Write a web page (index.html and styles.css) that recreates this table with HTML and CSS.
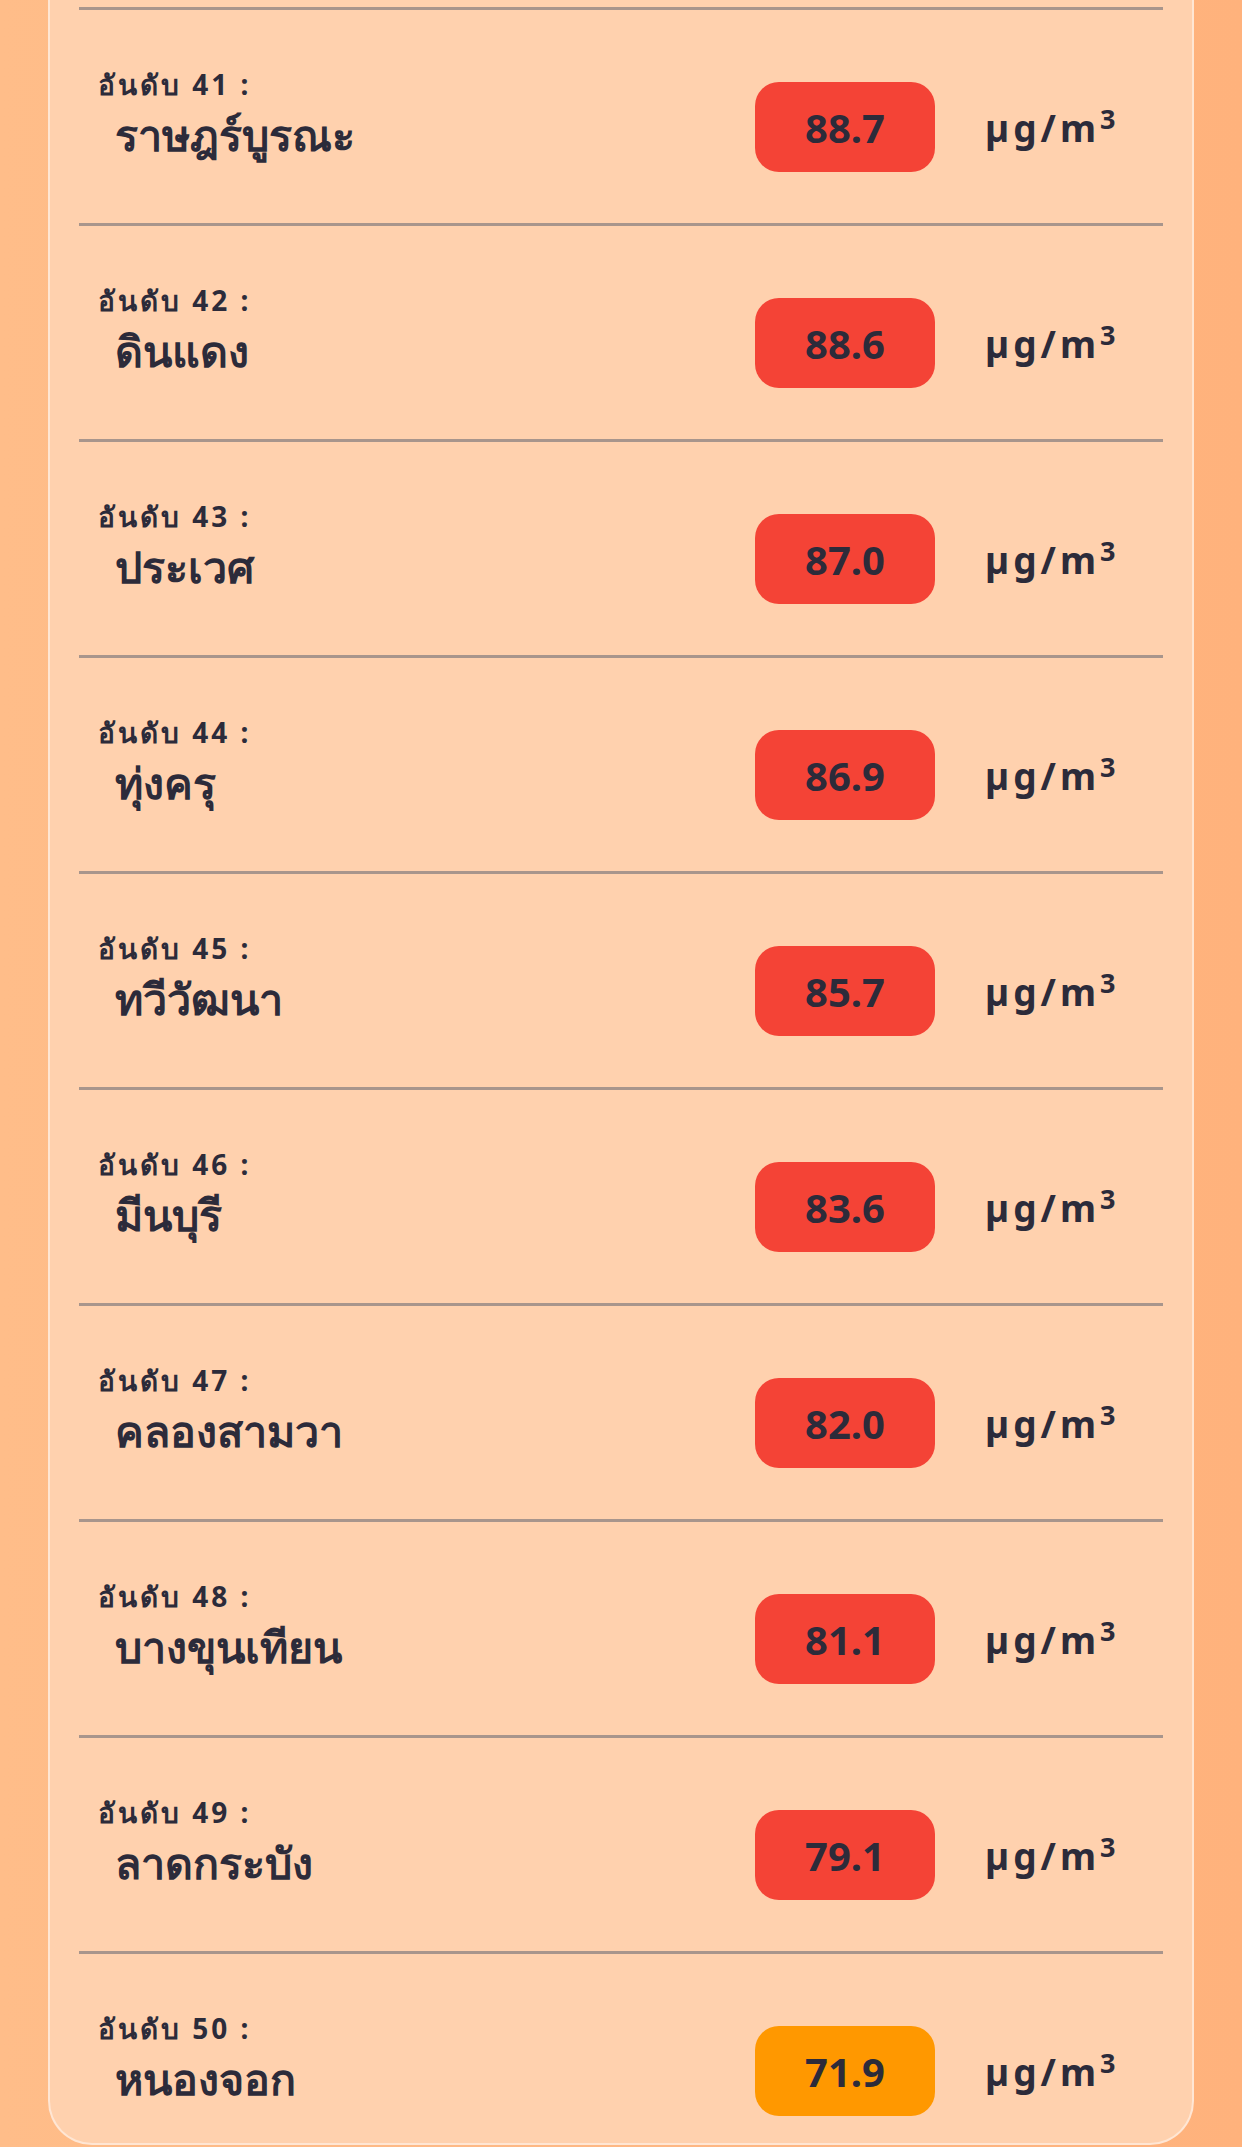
FILE: index.html
```html
<!DOCTYPE html>
<html lang="th">
<head>
    <meta charset="UTF-8">
    <meta name="viewport" content="width=device-width, initial-scale=1.0">
    <title>อันดับฝุ่น PM2.5</title>
    <link rel="stylesheet" href="styles.css">
</head>
<body>
    <div class="card">
        <div class="row">
            <div class="info"><div class="rank">อันดับ 41 :</div><div class="name">ราษฎร์บูรณะ</div></div>
            <div class="value"><span class="badge red">88.7</span><span class="unit">µg/m<sup>3</sup></span></div>
        </div>
        <div class="row">
            <div class="info"><div class="rank">อันดับ 42 :</div><div class="name">ดินแดง</div></div>
            <div class="value"><span class="badge red">88.6</span><span class="unit">µg/m<sup>3</sup></span></div>
        </div>
        <div class="row">
            <div class="info"><div class="rank">อันดับ 43 :</div><div class="name">ประเวศ</div></div>
            <div class="value"><span class="badge red">87.0</span><span class="unit">µg/m<sup>3</sup></span></div>
        </div>
        <div class="row">
            <div class="info"><div class="rank">อันดับ 44 :</div><div class="name">ทุ่งครุ</div></div>
            <div class="value"><span class="badge red">86.9</span><span class="unit">µg/m<sup>3</sup></span></div>
        </div>
        <div class="row">
            <div class="info"><div class="rank">อันดับ 45 :</div><div class="name">ทวีวัฒนา</div></div>
            <div class="value"><span class="badge red">85.7</span><span class="unit">µg/m<sup>3</sup></span></div>
        </div>
        <div class="row">
            <div class="info"><div class="rank">อันดับ 46 :</div><div class="name">มีนบุรี</div></div>
            <div class="value"><span class="badge red">83.6</span><span class="unit">µg/m<sup>3</sup></span></div>
        </div>
        <div class="row">
            <div class="info"><div class="rank">อันดับ 47 :</div><div class="name">คลองสามวา</div></div>
            <div class="value"><span class="badge red">82.0</span><span class="unit">µg/m<sup>3</sup></span></div>
        </div>
        <div class="row">
            <div class="info"><div class="rank">อันดับ 48 :</div><div class="name">บางขุนเทียน</div></div>
            <div class="value"><span class="badge red">81.1</span><span class="unit">µg/m<sup>3</sup></span></div>
        </div>
        <div class="row">
            <div class="info"><div class="rank">อันดับ 49 :</div><div class="name">ลาดกระบัง</div></div>
            <div class="value"><span class="badge red">79.1</span><span class="unit">µg/m<sup>3</sup></span></div>
        </div>
        <div class="row">
            <div class="info"><div class="rank">อันดับ 50 :</div><div class="name">หนองจอก</div></div>
            <div class="value"><span class="badge orange">71.9</span><span class="unit">µg/m<sup>3</sup></span></div>
        </div>
    </div>
</body>
</html>
```

FILE: styles.css
```css
body { margin: 0; font-family: "Noto Sans", "Open Sans", sans-serif; color: #2c2b3a; background: linear-gradient(90deg, #ffbd89, #ffb27c); min-height: 2147px; }
.card { margin: 0 48px; padding-top: 7px; background: #ffd1ae; border: 2px solid rgba(255, 240, 228, 0.7); border-top: none; border-radius: 0 0 44px 44px; box-sizing: border-box; height: 2145px; }
.row { margin: 0 29px; border-top: 3px solid #a8958c; height: 216px; box-sizing: border-box; display: flex; align-items: flex-start; padding: 0 44px 0 19px; }
.row:last-child { height: 192px; }
.info { flex: 1; padding-top: 56px; }
.rank { font-size: 28px; font-weight: 700; line-height: 36px; letter-spacing: 3px; }
.name { font-size: 43px; font-weight: 700; line-height: 56px; padding-left: 17px; margin-top: 5px; }
.value { display: flex; align-items: center; gap: 50px; padding-top: 72px; }
.badge { width: 180px; height: 90px; border-radius: 24px; display: flex; align-items: center; justify-content: center; font-size: 40px; font-weight: 700; }
.red { background: #f44336; }
.orange { background: #ff9800; }
.unit { font-size: 37px; font-weight: 700; width: 134px; letter-spacing: 4px; white-space: nowrap; }
.unit sup { font-size: 27px; letter-spacing: 0; }
```
